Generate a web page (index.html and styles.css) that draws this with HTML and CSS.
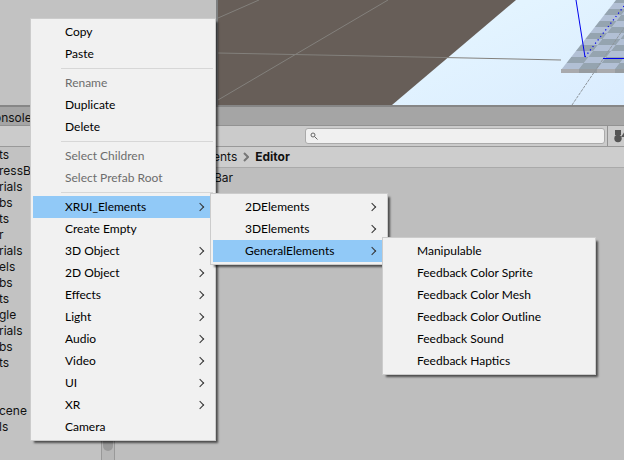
FILE: index.html
```html
<!DOCTYPE html>
<html lang="en">
<head>
<meta charset="utf-8">
<title>Editor</title>
<link rel="stylesheet" href="styles.css">
</head>
<body>
<main class="editor">
  <section class="top">
    <div class="hierarchy"></div>
    <svg class="scene" viewBox="0 0 406 105" preserveAspectRatio="xMinYMin slice" aria-hidden="true">
      <defs>
        <linearGradient id="sky" x1="0" y1="0" x2="1" y2="1"><stop offset="0.3" stop-color="#e3f4ff"/><stop offset="1" stop-color="#daecfe"/></linearGradient>
        <pattern id="tiles" width="36" height="12" patternUnits="userSpaceOnUse" patternTransform="translate(343 69) skewX(-38)">
          <rect width="36" height="12" fill="#b2c0d5"/>
          <path d="M0 0h18v6H0zM18 6h18v6H18z" fill="#95a4b0"/>
        </pattern>
      </defs>
      <rect width="406" height="105" fill="#675e58"/>
      <path d="M298 0H406V105H174Z" fill="url(#sky)"/>
      <path d="M398 0H406V70H343Z" fill="url(#tiles)"/>
      <path d="M343 69H406V73H343Z" fill="#a9aaad"/>
      <path d="M361 69h18v4h-18zM397 69h9v4h-9z" fill="#979ca0"/>
      <path d="M0 18L41 0M0 100L170 0M0 53L250 58L343 60" fill="none" stroke="#83807c"/>
      <path d="M354 105L406 28" fill="none" stroke="#8f969c" stroke-dasharray="3 1"/>
      <path d="M358 0L367 57" fill="none" stroke="#0000ee"/>
      <path d="M385 58.500H406" fill="none" stroke="#0000ee"/>
      <path d="M367 57L406 6" fill="none" stroke="#0000ee" stroke-width="1.200" stroke-dasharray="1.200 3"/>
    </svg>
  </section>
  <div class="tabs"><span>onsole</span></div>
  <div class="toolbar">
    <label class="search">
      <svg viewBox="0 0 8 8" aria-hidden="true"><circle cx="3" cy="3" r="2" /><path d="M4.500 4.500L7.500 7.500"/></svg>
      <input type="text" aria-label="Search">
    </label>
    <button class="filter" aria-label="Filter by type"><svg viewBox="0 0 16 14" aria-hidden="true"><path d="M1 1h6v5H1zM7 8l4-6 4 6z"/><circle cx="4" cy="9.500" r="3.700"/></svg></button>
  </div>
  <section class="bottom">
    <ul class="tree">
      <li>ts</li><li>ressBa</li><li>rials</li><li>bs</li><li>ts</li><li>r</li><li>rials</li><li>els</li><li>bs</li><li>ts</li><li>gle</li><li>rials</li><li>bs</li><li>ts</li><li></li><li></li><li>cene</li><li>ls</li>
    </ul>
    <div class="scrollbar"><div class="thumb"></div></div>
    <div class="assets">
      <nav class="crumbs"><span>ents</span><svg viewBox="0 0 6 10" aria-hidden="true"><path d="M1 1l4 4-4 4"/></svg><b>Editor</b></nav>
      <div class="asset">Bar</div>
    </div>
  </section>
</main>

<div class="menu context" role="menu">
  <button>Copy</button>
  <button>Paste</button>
  <hr>
  <button disabled>Rename</button>
  <button>Duplicate</button>
  <button>Delete</button>
  <hr>
  <button disabled>Select Children</button>
  <button disabled>Select Prefab Root</button>
  <hr>
  <button class="sub open">XRUI_Elements</button>
  <button>Create Empty</button>
  <button class="sub">3D Object</button>
  <button class="sub">2D Object</button>
  <button class="sub">Effects</button>
  <button class="sub">Light</button>
  <button class="sub">Audio</button>
  <button class="sub">Video</button>
  <button class="sub">UI</button>
  <button class="sub">XR</button>
  <button>Camera</button>
</div>
<div class="menu elements" role="menu">
  <button class="sub">2DElements</button>
  <button class="sub">3DElements</button>
  <button class="sub open">GeneralElements</button>
</div>
<div class="menu general" role="menu">
  <button>Manipulable</button>
  <button>Feedback Color Sprite</button>
  <button>Feedback Color Mesh</button>
  <button>Feedback Color Outline</button>
  <button>Feedback Sound</button>
  <button>Feedback Haptics</button>
</div>
</body>
</html>
```
FILE: styles.css
```css
* { box-sizing: border-box; }
body { margin: 0; font: 12px/16px Inter, sans-serif; color: #111; background: #bebebe; overflow: hidden; }
.editor { display: flex; flex-direction: column; height: 100vh; }
.top { display: flex; height: 105px; }
.hierarchy { width: 218px; background: #c2c2c2; border-right: 2px solid #7d7f80; }
.scene { flex: 1; min-width: 0; height: 105px; }
.tabs { height: 21px; padding-top: 3px; background: #a5a5a5; border-top: 2px solid #868686; border-bottom: 1px solid #929292; }
.tabs span { margin-left: -6px; }
.toolbar { display: flex; justify-content: flex-end; height: 21px; background: #cbcbcb; border-bottom: 1px solid #999; }
.search { display: flex; align-items: center; gap: 4px; width: 300px; height: 16px; margin: 2px 2px 0 0; padding-left: 4px; background: #f0f0f0; border: 1px solid #aaa; border-radius: 3px; }
.search svg { width: 8px; height: 8px; fill: none; stroke: #666; }
.search input { flex: 1; min-width: 0; height: 12px; padding: 0; border: 0; background: none; outline: 0; }
.filter { display: flex; align-items: center; justify-content: flex-start; width: 17px; padding: 0 0 0 6px; border: 0; border-left: 1px solid #929292; background: none; overflow: hidden; }
.filter svg { flex: none; width: 16px; height: 14px; fill: #555; }
.bottom { display: flex; flex: 1; min-height: 0; }
.tree { width: 101px; margin: 0; padding: 0; list-style: none; background: #c2c2c2; overflow: hidden; line-height: 15px; }
.tree li { height: 16px; margin-left: -1px; }
.scrollbar { display: flex; width: 14px; padding: 0 1px; background: #b7b7b7; border: solid #999; border-width: 0 1px; }
.thumb { width: 10px; height: 304px; background: #999; border-radius: 5px; }
.assets { flex: 1; }
.crumbs { display: flex; align-items: center; gap: 6px; height: 21px; padding-left: 98px; background: #cdcdcd; border-bottom: 1px solid #aaa; }
.crumbs svg { width: 6px; height: 10px; fill: none; stroke: #777; stroke-width: 2; }
.asset { padding: 2px 0 0 99px; }
.menu { position: absolute; padding: 2px; background: #f1f1f1; border: 1px solid #ccc; box-shadow: 3px 3px 2px -1px rgba(0,0,0,.6); }
.menu button { display: block; width: 100%; height: 22px; padding: 0 0 0 32px; border: 0; background: none; color: #000; font: 12px/22px Lato, sans-serif; text-align: left; }
.menu button:disabled { color: #6d6d6d; }
.menu .sub { display: flex; align-items: center; justify-content: space-between; padding-right: 10px; }
.menu .sub::after { content: ""; width: 5px; height: 5px; border: solid #333; border-width: 1px 1px 0 0; transform: rotate(45deg); }
.menu .open { background: #91c9f7; }
.menu hr { height: 1px; margin: 3px 0 3px 28px; border: 0; background: #d7d7d7; }
.context { left: 30px; top: 18px; width: 186px; }
.elements { left: 210px; top: 193px; width: 178px; }
.general { left: 382px; top: 237px; width: 214px; }
```
